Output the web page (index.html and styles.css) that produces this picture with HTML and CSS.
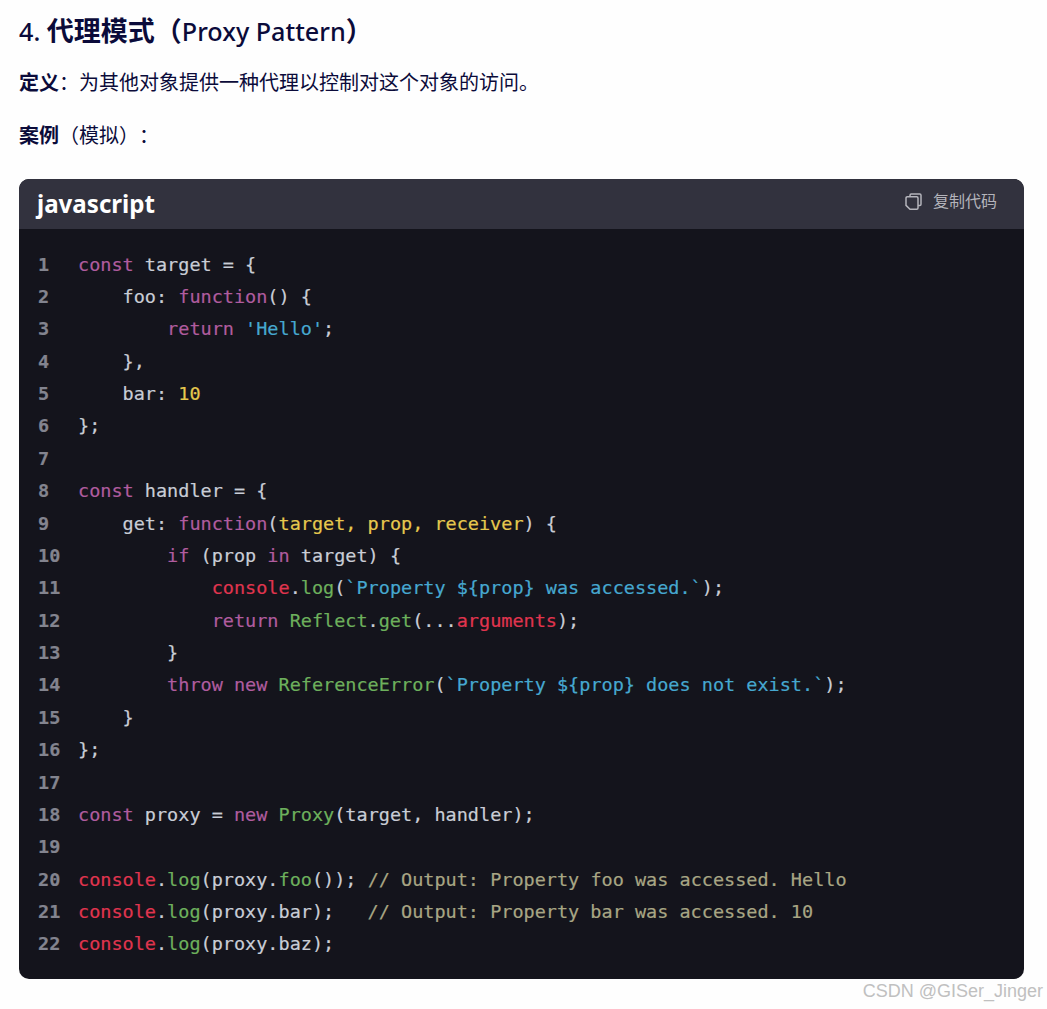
FILE: index.html
```html
<!DOCTYPE html>
<html lang="zh">
<head>
<meta charset="utf-8">
<title>代理模式</title>
<link rel="stylesheet" href="styles.css">
</head>
<body>
<main class="article">
<h3 class="title"><span class="lat">4. </span>代理模式（<span class="lat">Proxy Pattern</span>）</h3>
<p class="para"><strong>定义</strong>：为其他对象提供一种代理以控制对这个对象的访问。</p>
<p class="para"><strong>案例</strong>（模拟）：</p>
<section class="code-card">
<header class="code-head"><span class="lang">javascript</span><span class="copy"><svg class="copy-icon" width="17" height="17" viewBox="0 0 17 17" fill="none" stroke="currentColor" stroke-width="1.5"><path d="M5 3.600V2.200A1.200 1.200 0 0 1 6.200 1h8.600a1.200 1.200 0 0 1 1.200 1.200v9.100a1.200 1.200 0 0 1-1.200 1.200h-1.800"/><path d="M2.200 3.800h9.600a1.200 1.200 0 0 1 1.200 1.200v10a1.200 1.200 0 0 1-1.200 1.200H5L1 12.400V5a1.200 1.200 0 0 1 1.200-1.200z"/></svg>复制代码</span></header>
<div class="code-body">
<div class="ln"><span class="no">1</span><code><span class="k">const</span> target = {</code></div>
<div class="ln"><span class="no">2</span><code>    foo: <span class="k">function</span>() {</code></div>
<div class="ln"><span class="no">3</span><code>        <span class="k">return</span> <span class="s">'Hello'</span>;</code></div>
<div class="ln"><span class="no">4</span><code>    },</code></div>
<div class="ln"><span class="no">5</span><code>    bar: <span class="n">10</span></code></div>
<div class="ln"><span class="no">6</span><code>};</code></div>
<div class="ln"><span class="no">7</span><code></code></div>
<div class="ln"><span class="no">8</span><code><span class="k">const</span> handler = {</code></div>
<div class="ln"><span class="no">9</span><code>    get: <span class="k">function</span>(<span class="n">target, prop, receiver</span>) {</code></div>
<div class="ln"><span class="no">10</span><code>        <span class="k">if</span> (prop <span class="k">in</span> target) {</code></div>
<div class="ln"><span class="no">11</span><code>            <span class="r">console</span>.<span class="g">log</span>(<span class="s">`Property ${prop} was accessed.`</span>);</code></div>
<div class="ln"><span class="no">12</span><code>            <span class="k">return</span> <span class="g">Reflect</span>.<span class="g">get</span>(...<span class="r">arguments</span>);</code></div>
<div class="ln"><span class="no">13</span><code>        }</code></div>
<div class="ln"><span class="no">14</span><code>        <span class="k">throw</span> <span class="k">new</span> <span class="g">ReferenceError</span>(<span class="s">`Property ${prop} does not exist.`</span>);</code></div>
<div class="ln"><span class="no">15</span><code>    }</code></div>
<div class="ln"><span class="no">16</span><code>};</code></div>
<div class="ln"><span class="no">17</span><code></code></div>
<div class="ln"><span class="no">18</span><code><span class="k">const</span> proxy = <span class="k">new</span> <span class="g">Proxy</span>(target, handler);</code></div>
<div class="ln"><span class="no">19</span><code></code></div>
<div class="ln"><span class="no">20</span><code><span class="r">console</span>.<span class="g">log</span>(proxy.<span class="g">foo</span>()); <span class="c">// Output: Property foo was accessed. Hello</span></code></div>
<div class="ln"><span class="no">21</span><code><span class="r">console</span>.<span class="g">log</span>(proxy.bar);   <span class="c">// Output: Property bar was accessed. 10</span></code></div>
<div class="ln"><span class="no">22</span><code><span class="r">console</span>.<span class="g">log</span>(proxy.baz);</code></div>
</div>
</section>
</main>
<div class="watermark">CSDN @GISer_Jinger</div>
</body>
</html>
```
FILE: styles.css
```css
html, body { margin: 0; padding: 0; background: #fefefe; }
body { width: 1047px; height: 1009px; overflow: hidden; position: relative; font-family: "Noto Sans", "Noto Sans CJK SC", sans-serif; color: #0b0b3a; text-spacing-trim: space-all; }
.article { padding: 13px 23px 0 19px; }
.title { margin: 0 0 18px; font-size: 27px; line-height: 36px; font-weight: 700; }
.lat { font-weight: 500; font-size: 25.2px; }
.para { margin: 0 0 21px; font-size: 20px; line-height: 32px; font-weight: 400; }
.para strong { font-weight: 700; }
.code-card { margin-top: 27px; border-radius: 10px; overflow: hidden; background: #14141c; }
.code-head { height: 50px; background: #32323e; display: flex; align-items: center; justify-content: space-between; padding: 0 27px 0 18px; }
.lang { font-size: 24.1px; line-height: 30px; font-weight: 700; color: #fff; }
.copy { display: flex; align-items: center; gap: 11px; font-size: 16px; color: #b4b4bb; padding-bottom: 9px; }
.copy-icon { display: block; margin-top: 3px; }
.code-body { padding: 19.6px 0 18.04px; }
.ln { display: flex; height: 32.38px; line-height: 32.38px; font-family: "DejaVu Sans Mono", monospace; font-size: 18.5px; white-space: pre; color: #c9cdd6; -webkit-text-stroke: 0.2px currentColor; }
.no { width: 59px; box-sizing: border-box; padding-left: 19px; color: #83848f; font-weight: 700; }
.ln code { font-family: inherit; }
.k { color: #b05c9f; }
.s { color: #46a8d0; }
.n { color: #e6c84e; }
.r { color: #e0354f; }
.g { color: #6db05c; }
.c { color: #a8a684; }
.watermark { position: absolute; right: 4px; top: 979px; font-family: "Liberation Sans", sans-serif; font-size: 18px; line-height: 24px; color: #c0c0c0; }
```
